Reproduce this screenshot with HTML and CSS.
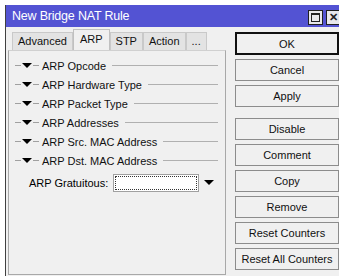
FILE: index.html
```html
<!DOCTYPE html>
<html lang="en">
<head>
    <meta charset="UTF-8">
    <title>New Bridge NAT Rule</title>
    <link rel="stylesheet" href="styles.css">
</head>
<body>
    <div class="window">
        <div class="titlebar">
            <span class="title">New Bridge NAT Rule</span>
            <div class="title-btns">
                <span class="tbtn"><span class="max-box"></span></span>
                <span class="tbtn close">&#x2715;</span>
            </div>
        </div>

        <div class="content">
            <div class="left">
                <div class="tabs">
                    <div class="tab">Advanced</div>
                    <div class="tab active">ARP</div>
                    <div class="tab">STP</div>
                    <div class="tab">Action</div>
                    <div class="tab">...</div>
                </div>
                <div class="panel">
                    <div class="group"><span class="dash"></span><span class="arrow"></span><span class="dash"></span><span class="label">ARP Opcode</span></div>
                    <div class="group"><span class="dash"></span><span class="arrow"></span><span class="dash"></span><span class="label">ARP Hardware Type</span></div>
                    <div class="group"><span class="dash"></span><span class="arrow"></span><span class="dash"></span><span class="label">ARP Packet Type</span></div>
                    <div class="group"><span class="dash"></span><span class="arrow"></span><span class="dash"></span><span class="label">ARP Addresses</span></div>
                    <div class="group"><span class="dash"></span><span class="arrow"></span><span class="dash"></span><span class="label">ARP Src. MAC Address</span></div>
                    <div class="group"><span class="dash"></span><span class="arrow"></span><span class="dash"></span><span class="label">ARP Dst. MAC Address</span></div>

                    <div class="field">
                        <span class="field-label">ARP Gratuitous:</span>
                        <span class="select"><span class="focus"></span></span>
                        <span class="arrow big"></span>
                    </div>
                </div>
            </div>

            <div class="buttons">
                <button class="btn default">OK</button>
                <button class="btn">Cancel</button>
                <button class="btn">Apply</button>
                <button class="btn spaced">Disable</button>
                <button class="btn">Comment</button>
                <button class="btn">Copy</button>
                <button class="btn">Remove</button>
                <button class="btn">Reset Counters</button>
                <button class="btn">Reset All Counters</button>
            </div>
        </div>
        <div class="statusbar"></div>
    </div>
</body>
</html>
```

FILE: styles.css
```css
/* Page */
body {
    margin: 0;
    background-color: #ffffff;
    font-family: "Liberation Sans", Arial, sans-serif;
    font-size: 11px;
    color: #000;
    overflow: hidden;
}

.window {
    margin: 5px 0 0 5px;
    height: 271px;
    background-color: #f0f0f0;
    border-left: 1px solid #404040;
}

/* Title bar */
.titlebar {
    height: 22px;
    background-color: #5353d3;
    color: #fff;
    display: flex;
    align-items: center;
    justify-content: space-between;
    padding-left: 6px;
}

.title {
    font-size: 12.5px;
    letter-spacing: -0.2px;
}

.title-btns {
    display: flex;
    gap: 3px;
    margin-top: 3px;
}

.tbtn {
    width: 13px;
    height: 13px;
    background-color: #e8e8ec;
    border: 1px solid #202020;
    display: flex;
    align-items: center;
    justify-content: center;
}

.max-box {
    width: 7px;
    height: 6px;
    border: 1px solid #222;
    border-top-width: 2px;
}

.close {
    width: 10px;
    border-right: none;
    font-size: 11px;
    font-weight: bold;
    color: #222;
    justify-content: flex-start;
    padding-left: 2px;
}

/* Main area */
.content {
    display: flex;
    padding: 5px 0 0 2px;
}

.left {
    width: 218px;
}

.tabs {
    display: flex;
    align-items: flex-end;
    height: 18px;
    margin-left: 4px;
}

.tab {
    height: 17px;
    line-height: 17px;
    padding: 0 5px;
    background-color: #e3e3e3;
    border: 1px solid #c9c9c9;
    border-bottom: none;
    color: #111;
}

.tab.active {
    height: 20px;
    line-height: 18px;
    background-color: #f0f0f0;
    border-color: #c0c0c0;
    padding: 0 6px;
}

.panel {
    height: 218px;
    border: 1px solid #a8a8a8;
    border-top-color: #d0d0d0;
    padding-top: 5px;
    box-sizing: content-box;
}

/* Collapsible groups */
.group {
    display: flex;
    align-items: center;
    height: 19px;
    padding: 0 7px 0 6px;
    color: #111;
}

.dash {
    width: 6px;
    height: 1px;
    background-color: #a0a0a0;
}

.arrow {
    width: 0;
    height: 0;
    border-left: 5px solid transparent;
    border-right: 5px solid transparent;
    border-top: 5px solid #000;
    margin: 0 1px;
}

.label {
    margin-left: 3px;
    display: flex;
    align-items: center;
    flex: 1;
}

.label::after {
    content: "";
    flex: 1;
    height: 1px;
    margin-left: 6px;
    background-color: #b0b0b0;
}

/* ARP Gratuitous field */
.field {
    display: flex;
    align-items: center;
    height: 17px;
    margin-top: 4px;
    padding-left: 20px;
}

.field-label {
    width: 84px;
}

.select {
    width: 82px;
    height: 14px;
    border: 1px solid #a0a0a0;
    background-color: #fff;
    padding: 1px;
}

.focus {
    display: block;
    height: 12px;
    border: 1px dotted #333;
}

.arrow.big {
    margin-left: 5px;
}

/* Button column */
.buttons {
    display: flex;
    flex-direction: column;
    gap: 4px;
    margin-left: 9px;
}

.btn {
    width: 104px;
    height: 22px;
    padding: 0;
    font-family: "Liberation Sans", Arial, sans-serif;
    font-size: 11px;
    color: #111;
    background-color: #f0f0f0;
    border: 1px solid #8c8c8c;
    border-radius: 0;
}

.btn.default {
    border: 2px solid #111;
    height: 23px;
}

.btn.spaced {
    margin-top: 7px;
}

.statusbar {
    margin: 2px 0 0 2px;
    height: 4px;
    border-top: 1px solid #b8b8b8;
}
```
